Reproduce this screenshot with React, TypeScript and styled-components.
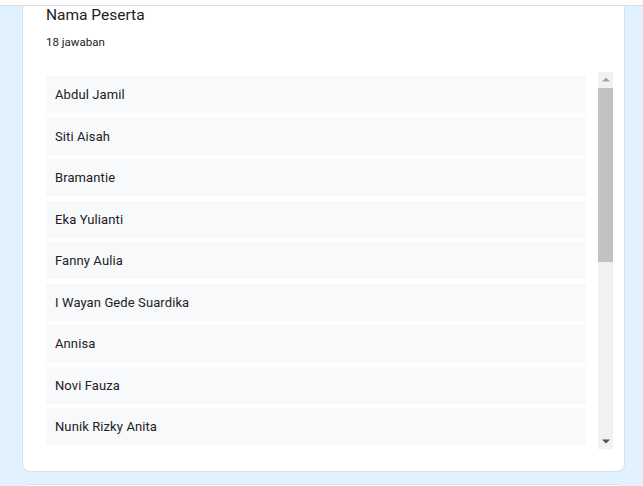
import React from "react";
import styled, { createGlobalStyle } from "styled-components";

const Global = createGlobalStyle`
  html, body {
    margin: 0;
    padding: 0;
    background: #e1f1fd;
    font-family: Roboto, "Liberation Sans", Arial, sans-serif;
    color: #202124;
    overflow: hidden;
  }
`;

const Page = styled.div`
  width: 643px;
  height: 486px;
  display: flex;
  flex-direction: column;
  overflow: hidden;
`;

const TopBar = styled.div`
  flex: 0 0 5px;
  background: #ffffff;
  border-bottom: 1px solid #d9dde1;
`;

const Column = styled.div`
  display: flex;
  flex-direction: column;
  gap: 12px;
  padding: 0 18px 0 22px;
`;

const Card = styled.section<{ $cut?: boolean }>`
  background: #ffffff;
  border: 1px solid #d6e2ec;
  border-top: ${(p) => (p.$cut ? "none" : "1px solid #d6e2ec")};
  border-radius: ${(p) => (p.$cut ? "0 0 8px 8px" : "8px")};
  padding: 0 11px 22px 23px;
  min-height: 40px;
  display: flex;
  flex-direction: column;
`;

const Title = styled.h2`
  margin: -1px 0 0 0;
  font-size: 15.5px;
  line-height: 20px;
  font-weight: 400;
`;

const Sub = styled.div`
  margin-top: 10px;
  font-size: 11.5px;
  line-height: 14px;
`;

const ListFrame = styled.div`
  margin-top: 23px;
  height: 377px;
  display: flex;
  gap: 12px;
`;

const List = styled.ul`
  flex: 1;
  list-style: none;
  margin: 0;
  padding: 4px 0 4px 0;
  overflow: hidden;
  display: flex;
  flex-direction: column;
  gap: 4.5px;
`;

const Item = styled.li`
  flex: 0 0 37px;
  background: #f8f9fa;
  display: flex;
  align-items: center;
  padding: 0 9px;
  font-size: 13px;
  letter-spacing: 0.1px;
`;

const Scrollbar = styled.div`
  flex: 0 0 15px;
  display: flex;
  flex-direction: column;
  background: #f1f1f1;
`;

const ArrowButton = styled.div`
  flex: 0 0 15px;
  display: flex;
  align-items: center;
  justify-content: center;
`;

const Track = styled.div`
  flex: 1;
  display: flex;
  flex-direction: column;
`;

const Thumb = styled.div`
  margin-top: 1px;
  width: 15px;
  background: #c1c1c1;
`;

const names = [
  "Abdul Jamil",
  "Siti Aisah",
  "Bramantie",
  "Eka Yulianti",
  "Fanny Aulia",
  "I Wayan Gede Suardika",
  "Annisa",
  "Novi Fauza",
  "Nunik Rizky Anita",
  "Dewi Lestari",
  "Rahmat Hidayat",
  "Putu Ayu Wulandari",
  "Agus Setiawan",
  "Rina Marlina",
  "Yusuf Maulana",
  "Sri Wahyuni",
  "Hendra Gunawan",
  "Lia Amelia",
];

const VIEW = 377;
const CONTENT = 8 + names.length * 37 + (names.length - 1) * 4.5;
const TRACK = VIEW - 30;

export default function App() {
  const thumbHeight = Math.round((TRACK * VIEW) / CONTENT);
  return (
    <Page>
      <Global />
      <TopBar />
      <Column>
        <Card $cut>
          <Title>Nama Peserta</Title>
          <Sub>18 jawaban</Sub>
          <ListFrame>
            <List>
              {names.map((n) => (
                <Item key={n}>{n}</Item>
              ))}
            </List>
            <Scrollbar>
              <ArrowButton>
                <svg width="8" height="5" viewBox="0 0 8 5">
                  <path d="M0 4.5 L4 0.5 L8 4.5 Z" fill="#a3a3a3" />
                </svg>
              </ArrowButton>
              <Track>
                <Thumb style={{ height: thumbHeight }} />
              </Track>
              <ArrowButton>
                <svg width="8" height="5" viewBox="0 0 8 5">
                  <path d="M0 0.5 L8 0.5 L4 4.5 Z" fill="#505050" />
                </svg>
              </ArrowButton>
            </Scrollbar>
          </ListFrame>
        </Card>
        <Card />
      </Column>
    </Page>
  );
}
